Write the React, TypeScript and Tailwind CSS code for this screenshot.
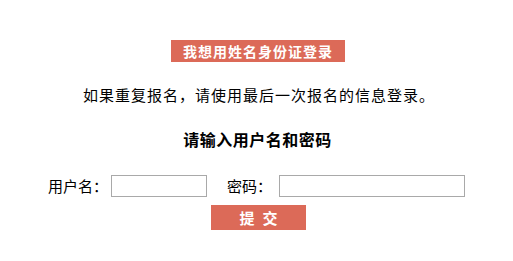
export default function App() {
  return (
    <div
      className="w-[513px] h-[261px] bg-white text-black pt-[40px] flex flex-col items-center"
      style={{ fontFamily: '"Noto Sans CJK SC", "Noto Sans", sans-serif' }}
    >
      {/* identity login */}
      <button className="w-[174px] h-[22px] bg-[#dc6a58] text-white text-[14px] font-bold tracking-[1px] leading-none flex items-center justify-center ml-[3px]">
        我想用姓名身份证登录
      </button>

      <p className="mt-[21px] h-[24px] leading-[24px] text-[15px] tracking-[1px] ml-[5px]">
        如果重复报名，请使用最后一次报名的信息登录。
      </p>

      <h3 className="mt-[20px] h-[24px] leading-[24px] text-[16px] font-bold tracking-[0.5px] ml-[2px]">
        请输入用户名和密码
      </h3>

      <div className="mt-[24px] flex items-center text-[15px]">
        <span className="w-[60px] leading-[22px]">用户名：</span>
        <input
          type="text"
          className="ml-[3px] w-[96px] h-[22px] border border-[#a9a9a9] outline-none"
        />
        <span className="ml-[20px] w-[45px] leading-[22px]">密码：</span>
        <input
          type="password"
          className="ml-[7px] w-[186px] h-[22px] border border-[#a9a9a9] outline-none"
        />
      </div>

      <button className="mt-[8px] ml-[4px] w-[95px] h-[25px] bg-[#dc6a58] text-white text-[15px] font-bold flex items-center justify-center gap-[8px] leading-none">
        <span>提</span>
        <span>交</span>
      </button>
    </div>
  );
}
